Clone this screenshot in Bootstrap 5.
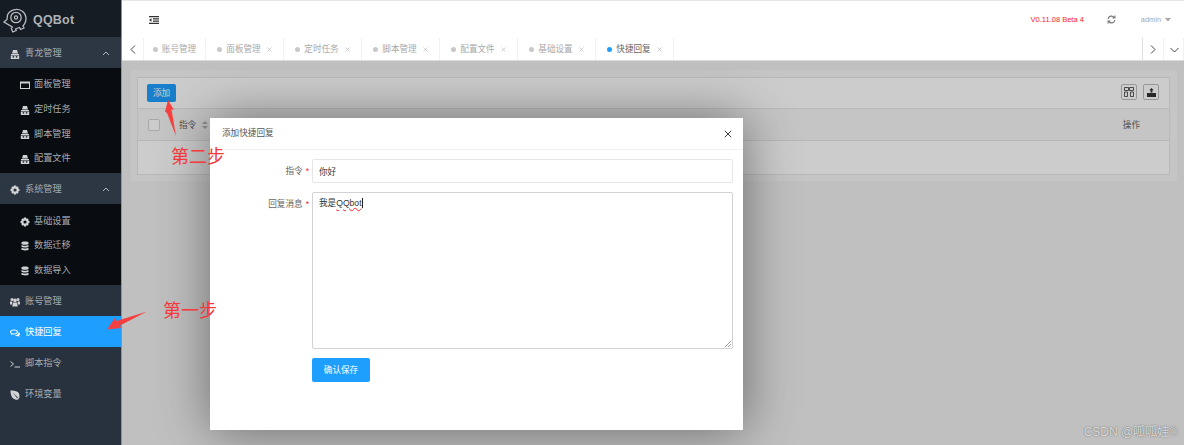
<!DOCTYPE html>
<html lang="zh">
<head>
  <meta charset="UTF-8">
  <title>QQBot</title>
  <link href="https://cdn.jsdelivr.net/npm/bootstrap@5.3.0/dist/css/bootstrap.min.css" rel="stylesheet">
  <style>
    html, body { height: 445px; overflow: hidden; }
    body { font-family: "Liberation Sans", "Noto Sans CJK SC", sans-serif; font-size: 8.6px; color: #666; background: #fff; }
    .app-shell { height: 445px; }
    .side-bar { width: 122px; flex: none; background: #28323e; border-right: 1px solid #8f9396; color: #a7abaf; font-size: 9.2px; }
    .logo-box { height: 37px; background: #151c24; padding: 4px 0 0 3px; gap: 6px; }
    .logo-name { font-size: 12.5px; font-weight: 700; color: #adb1b5; letter-spacing: .2px; }
    .menu-top { height: 31px; padding: 2px 10px 0; gap: 5px; }
    .menu-top.is-open { background: #2d3744; }
    .menu-top.is-active { background: #1e9fff; color: #fff; }
    .menu-sub { background: #090c10; padding: 3px 0 4px; }
    .menu-item { height: 24.6px; padding: 4px 0 0 20px; gap: 4px; }
    .menu-ic { width: 10px; height: 10px; flex: none; fill: currentColor; color: #d0d2d4; }
    .is-active .menu-ic { color: #fff; }
    .menu-arrow { margin-left: auto; margin-right: 1px; }
    .main-col { min-width: 0; }
    .top-bar { height: 38px; border-top: 1px solid #e6e6e6; padding-right: 13px; background: #fff; }
    .fold-ic { margin-left: 27px; color: #333; }
    .ver-text { color: #f5222d; margin-right: 23px; font-size: 7.5px; }
    .user-name { color: #a6a6a6; margin-left: 25px; font-size: 7.4px; }
    .tab-bar { height: 23px; background: #fff; border-bottom: 1px solid #dcdcdc; flex: none; color: #a9a9a9; }
    .tab-cell { height: 22px; gap: 4px; padding-top: 1px; border-right: 1px solid #f2f2f2; justify-content: center; }
    .tab-nav { width: 22px; }
    .tab-first { width: 62px; }
    .tab-item { width: 78px; }
    .tab-last { width: 20px; padding-left: 2px; }
    .tab-dot { width: 5px; height: 5px; border-radius: 50%; background: #c8c8c8; }
    .tab-item.is-current .tab-dot { background: #1e9fff; }
    .tab-item.is-current { color: #666; }
    .tab-close { width: 5px; height: 5px; color: #b0b0b0; margin-left: 2px; }
    .tab-fill { flex: 1; }
    .page-area { position: relative; overflow: hidden; background: #f0f0f0; padding: 9px 7px 0 9px; }
    .page-card { background: #f7f7f7; border: 0; border-radius: 2px; padding: 7px 7px 6px 6px; }
    .grid-box { border: 1px solid #e6e6e6; background: #fff; }
    .grid-tools { height: 31px; padding: 6px 10px 0 9px; gap: 6px; border-bottom: 1px solid #e6e6e6; }
    .add-btn { height: 18px; width: 29px; padding: 1px 0 0; font-size: 8.6px; background: #1e9fff; border: 0; border-radius: 2px; color: #fff; }
    .tool-btn { width: 16px; height: 16px; border: 1px solid #bdbdbd; border-radius: 2px; color: #333; }
    .grid-head { height: 32px; background: #f7f7f7; border-bottom: 1px solid #e6e6e6; padding: 1px 29px 0 10px; color: #666; }
    .head-check { width: 12px; height: 12px; border: 1px solid #d2d2d2; border-radius: 2px; background: #fff; }
    .head-name { margin-left: 19px; }
    .sort-ic { margin-left: 6px; color: #b2b2b2; }
    .grid-empty { height: 33px; }
    .dim-layer { position: absolute; inset: 0; background: rgba(0, 0, 0, .2); }
    .dlg-box { position: absolute; left: 88px; top: 57px; width: 533px; height: 312px; background: #fff; border: 0; border-radius: 0; box-shadow: 1px 1px 50px rgba(0, 0, 0, .45); }
    .dlg-head { height: 32px; padding: 0 11px 0 12px; border-bottom: 1px solid #f0f0f0; color: #555; }
    .dlg-form { padding: 9px 10px 0 0; }
    .form-line { margin-bottom: 9px; }
    .form-name { width: 102px; flex: none; text-align: right; padding-right: 3px; line-height: 24px; margin: 0; color: #666; }
    .form-name i { color: #f5222d; font-style: normal; margin-left: 3px; }
    .field-box { height: 24px; padding: 0 6px; line-height: 24px; font-size: 8.6px; color: #333; border: 1px solid #e6e6e6; border-radius: 2px; }
    .field-area { height: 157px; line-height: 1.2; padding-top: 5px; position: relative; border-color: #d2d2d2; }
    .spell-word { text-decoration: underline wavy #f5222d 1px; }
    .type-caret { border-right: 1px solid #222; }
    .grip-ic { position: absolute; right: 1px; bottom: 1px; color: #777; }
    .save-btn { margin-left: 102px; width: 58px; height: 24px; padding: 0; font-size: 8.6px; background: #1e9fff; border: 0; border-radius: 2px; color: #fff; }
    .note-layer { position: absolute; left: 0; top: 0; pointer-events: none; }
    .note-text { position: absolute; color: #f5383a; font-size: 18px; line-height: 1; white-space: nowrap; font-family: "Noto Sans CJK SC", sans-serif; font-weight: 400; }
    .mark-csdn { position: absolute; right: 6px; bottom: 4px; color: #dcdcdc; font-size: 12px; text-shadow: 0 0 1.5px #555; white-space: nowrap; }
  </style>
</head>
<body>

<svg width="0" height="0" class="position-absolute">
  <symbol id="ic-dome" viewBox="0 0 10 10"><path d="M3 1h4l1 3.400H2zM1 5h8v1H1zM.8 6.600h8.400V10H.8z"/><circle cx="3.400" cy="7.800" r=".9" fill="#28323e"/><circle cx="6.600" cy="7.800" r=".9" fill="#28323e"/></symbol>
  <symbol id="ic-win" viewBox="0 0 10 10"><path fill-rule="evenodd" d="M0 1.500h10v7.500H0zM1 3.600V8h8V3.600z"/></symbol>
  <symbol id="ic-gear" viewBox="0 0 10 10"><path fill-rule="evenodd" d="M4 .5h2l.3 1.300 1-.5 1.400 1.400-.5 1 1.300.3v2l-1.300.3.5 1-1.400 1.400-1-.5-.3 1.300H4l-.3-1.300-1 .5-1.400-1.400.5-1L.5 6V4l1.300-.3-.5-1 1.400-1.400 1 .5zM5 3.400a1.600 1.600 0 1 0 0 3.200 1.600 1.600 0 0 0 0-3.200z"/></symbol>
  <symbol id="ic-db" viewBox="0 0 10 10"><path d="M1.500 1.500C1.500.3 8.500.3 8.500 1.500V3C8.500 4 1.500 4 1.500 3zM1.500 4C3 5 7 5 8.500 4V5.700C8.500 6.700 1.500 6.700 1.500 5.700zM1.500 6.700C3 7.700 7 7.700 8.500 6.700V8.500C8.500 9.700 1.500 9.700 1.500 8.500z"/></symbol>
  <symbol id="ic-users" viewBox="0 0 10 10"><circle cx="2" cy="2.400" r="1.500"/><circle cx="8" cy="2.400" r="1.500"/><circle cx="5" cy="3.400" r="1.800"/><path d="M0 4.400h2.400L2 7.600H0zM7.600 4.400H10V7.600H8zM3 5.500h4l.8 4H2.200z"/></symbol>
  <symbol id="ic-chat" viewBox="0 0 10 10"><path fill-rule="evenodd" d="M4 1.500c2.200 0 4 1 4 2.500S6.200 6.500 4 6.500c-.5 0-1 0-1.400-.2L1 7.300l.4-1.500C.5 5.300 0 4.700 0 4c0-1.500 1.800-2.500 4-2.500zM4 2.500C2.400 2.500 1 3.100 1 4s1.400 1.500 3 1.500S7 4.900 7 4 5.600 2.500 4 2.500z"/><path d="M8.600 4.300c.9.400 1.400 1 1.400 1.800 0 .7-.4 1.200-1 1.600l.4 1.300-1.600-.9c-1 .2-2.200 0-3-.6 2 0 3.800-1.200 3.800-3.200z"/></symbol>
  <symbol id="ic-term" viewBox="0 0 10 10"><path d="M.5 2.500l3 2.500-3 2.500" fill="none" stroke="currentColor"/><path d="M4.500 7.500H10v1H4.500z"/></symbol>
  <symbol id="ic-leaf" viewBox="0 0 10 10"><path fill-rule="evenodd" d="M.5.500c4.500 0 9 .5 9 5.500 0 1.500-.5 2.800-1.500 3.500C3.500 10.500.5 7 .5.500zM2.800 2.600l4.300 5.700.9-.6z"/></symbol>
  <symbol id="ic-x" viewBox="0 0 10 10"><path d="M1 1l8 8M9 1L1 9" fill="none" stroke="currentColor" stroke-width="1.200"/></symbol>
</svg>

<div class="app-shell d-flex">
  <aside class="side-bar d-flex flex-column">
    <div class="logo-box d-flex align-items-center">
      <svg width="24" height="25" viewBox="0 0 24 25" fill="none" stroke="#b9bcbf" stroke-width="1.300"><path d="M4.500 7C7 1.500 14 0 19 3c4.500 3 5 9 2.500 13l-1.500 2 1 2-3.500 1.500-1-2-4 1.500.8 1.500-3.500 1.500-1.500-3.500 1-1.500L1 14l3-2.500z"/><circle cx="13" cy="9.500" r="5.200"/><circle cx="13" cy="9.500" r="1.600"/></svg>
      <span class="logo-name">QQBot</span>
    </div>
    <div class="menu-top is-open d-flex align-items-center"><svg class="menu-ic"><use href="#ic-dome"/></svg>青龙管理<svg class="menu-arrow" width="8" height="5" viewBox="0 0 8 5" fill="none" stroke="#b5b8bb"><path d="M1 4l3-3 3 3"/></svg></div>
    <div class="menu-sub">
      <div class="menu-item d-flex align-items-center"><svg class="menu-ic"><use href="#ic-win"/></svg>面板管理</div>
      <div class="menu-item d-flex align-items-center"><svg class="menu-ic"><use href="#ic-dome"/></svg>定时任务</div>
      <div class="menu-item d-flex align-items-center"><svg class="menu-ic"><use href="#ic-dome"/></svg>脚本管理</div>
      <div class="menu-item d-flex align-items-center"><svg class="menu-ic"><use href="#ic-dome"/></svg>配置文件</div>
    </div>
    <div class="menu-top is-open d-flex align-items-center"><svg class="menu-ic"><use href="#ic-gear"/></svg>系统管理<svg class="menu-arrow" width="8" height="5" viewBox="0 0 8 5" fill="none" stroke="#b5b8bb"><path d="M1 4l3-3 3 3"/></svg></div>
    <div class="menu-sub">
      <div class="menu-item d-flex align-items-center"><svg class="menu-ic"><use href="#ic-gear"/></svg>基础设置</div>
      <div class="menu-item d-flex align-items-center"><svg class="menu-ic"><use href="#ic-db"/></svg>数据迁移</div>
      <div class="menu-item d-flex align-items-center"><svg class="menu-ic"><use href="#ic-db"/></svg>数据导入</div>
    </div>
    <div class="menu-top d-flex align-items-center"><svg class="menu-ic"><use href="#ic-users"/></svg>账号管理</div>
    <div class="menu-top is-active d-flex align-items-center"><svg class="menu-ic"><use href="#ic-chat"/></svg>快捷回复</div>
    <div class="menu-top d-flex align-items-center"><svg class="menu-ic"><use href="#ic-term"/></svg>脚本指令</div>
    <div class="menu-top d-flex align-items-center"><svg class="menu-ic"><use href="#ic-leaf"/></svg>环境变量</div>
  </aside>

  <div class="main-col flex-grow-1 d-flex flex-column">
    <header class="top-bar d-flex align-items-center flex-none">
      <svg class="fold-ic" width="10" height="8" viewBox="0 0 10 8" fill="currentColor"><path d="M0 0h10v1.200H0zM4 2.200h6v1.200H4zM4 4.500h6v1.200H4zM0 6.800h10V8H0zM2.500 2.300v3.400L0 4z"/></svg>
      <span class="ver-text ms-auto">V0.11.08 Beta 4</span>
      <svg width="9" height="9" viewBox="0 0 10 10" fill="none" stroke="#777" stroke-width="1.300"><path d="M1.200 4.200A3.900 3.900 0 0 1 8 2.600M8.800 5.800A3.900 3.900 0 0 1 2 7.400"/><path d="M8.800 .6v2.600H6.200M1.200 9.400V6.800h2.600"/></svg>
      <span class="user-name">admin</span>
      <svg class="ms-1" width="6" height="4" viewBox="0 0 6 4" fill="#a6a6a6"><path d="M0 0h6L3 3.500z"/></svg>
    </header>

    <nav class="tab-bar d-flex">
      <div class="tab-cell tab-nav d-flex align-items-center"><svg width="6" height="9" viewBox="0 0 6 9" fill="none" stroke="#444"><path d="M5 .5l-4 4 4 4"/></svg></div>
      <div class="tab-cell tab-first d-flex align-items-center"><span class="tab-dot"></span>账号管理</div>
      <div class="tab-cell tab-item d-flex align-items-center"><span class="tab-dot"></span>面板管理<svg class="tab-close"><use href="#ic-x"/></svg></div>
      <div class="tab-cell tab-item d-flex align-items-center"><span class="tab-dot"></span>定时任务<svg class="tab-close"><use href="#ic-x"/></svg></div>
      <div class="tab-cell tab-item d-flex align-items-center"><span class="tab-dot"></span>脚本管理<svg class="tab-close"><use href="#ic-x"/></svg></div>
      <div class="tab-cell tab-item d-flex align-items-center"><span class="tab-dot"></span>配置文件<svg class="tab-close"><use href="#ic-x"/></svg></div>
      <div class="tab-cell tab-item d-flex align-items-center"><span class="tab-dot"></span>基础设置<svg class="tab-close"><use href="#ic-x"/></svg></div>
      <div class="tab-cell tab-item is-current d-flex align-items-center"><span class="tab-dot"></span>快捷回复<svg class="tab-close"><use href="#ic-x"/></svg></div>
      <div class="tab-fill"></div>
      <div class="tab-cell tab-nav d-flex align-items-center border-start"><svg width="6" height="9" viewBox="0 0 6 9" fill="none" stroke="#444"><path d="M1 .5l4 4-4 4"/></svg></div>
      <div class="tab-cell tab-last d-flex align-items-center"><svg width="9" height="6" viewBox="0 0 9 6" fill="none" stroke="#444"><path d="M.5 1l4 4 4-4"/></svg></div>
    </nav>

    <main class="page-area flex-grow-1">
      <div class="page-card card">
        <div class="grid-box">
          <div class="grid-tools d-flex">
            <button class="add-btn btn" type="button">添加</button>
            <span class="tool-btn ms-auto d-flex align-items-center justify-content-center"><svg width="10" height="10" viewBox="0 0 10 10" fill="none" stroke="currentColor" stroke-width=".8"><path d="M.5.500h4v3h-4zM5.500.500h4v3h-4zM.5 5h3v4.500h-3zM6.500 5h3v4.500h-3z"/></svg></span>
            <span class="tool-btn d-flex align-items-center justify-content-center"><svg width="9" height="9" viewBox="0 0 10 10" fill="currentColor"><path d="M0 5.500h10V10H0zM5 0l2.500 2.500H6v2.500H4V2.500H2.500z"/></svg></span>
          </div>
          <div class="grid-head d-flex align-items-center">
            <span class="head-check"></span>
            <span class="head-name">指令</span>
            <svg class="sort-ic" width="6" height="8" viewBox="0 0 6 8" fill="currentColor"><path d="M3 0l3 3H0zM3 8L0 5h6z"/></svg>
            <span class="ms-auto">操作</span>
          </div>
          <div class="grid-empty"></div>
        </div>
      </div>

      <div class="dim-layer"></div>

      <div class="dlg-box modal-content">
        <div class="dlg-head d-flex align-items-center justify-content-between">
          <span>添加快捷回复</span>
          <svg width="8" height="8" viewBox="0 0 10 10" style="color:#333"><use href="#ic-x"/></svg>
        </div>
        <form class="dlg-form">
          <div class="form-line d-flex">
            <label class="form-name">指令<i>*</i></label>
            <div class="field-box form-control flex-grow-1">你好</div>
          </div>
          <div class="form-line d-flex">
            <label class="form-name">回复消息<i>*</i></label>
            <div class="field-box field-area form-control flex-grow-1">我是<span class="spell-word type-caret">QQbot</span>
              <svg class="grip-ic" width="6" height="6" viewBox="0 0 6 6" fill="none" stroke="currentColor" stroke-width=".7"><path d="M0 6l6-6M3 6l3-3"/></svg>
            </div>
          </div>
          <button class="save-btn btn" type="button">确认保存</button>
        </form>
      </div>
    </main>
  </div>
</div>

<svg class="note-layer" width="1184" height="445" viewBox="0 0 1184 445" fill="#f6403f">
  <path d="M168 100l6 10-2.500-.8L176 136l-9-23-2-1.500z"/>
  <path d="M107 329.500l8-11.500 1.500 3L147 311.500l-27 14 1 2.500z"/>
</svg>
<div class="note-text" style="left:171px;top:146px">第二步</div>
<div class="note-text" style="left:163px;top:300px">第一步</div>
<div class="mark-csdn">CSDN @呱呱娃©</div>

</body>
</html>
